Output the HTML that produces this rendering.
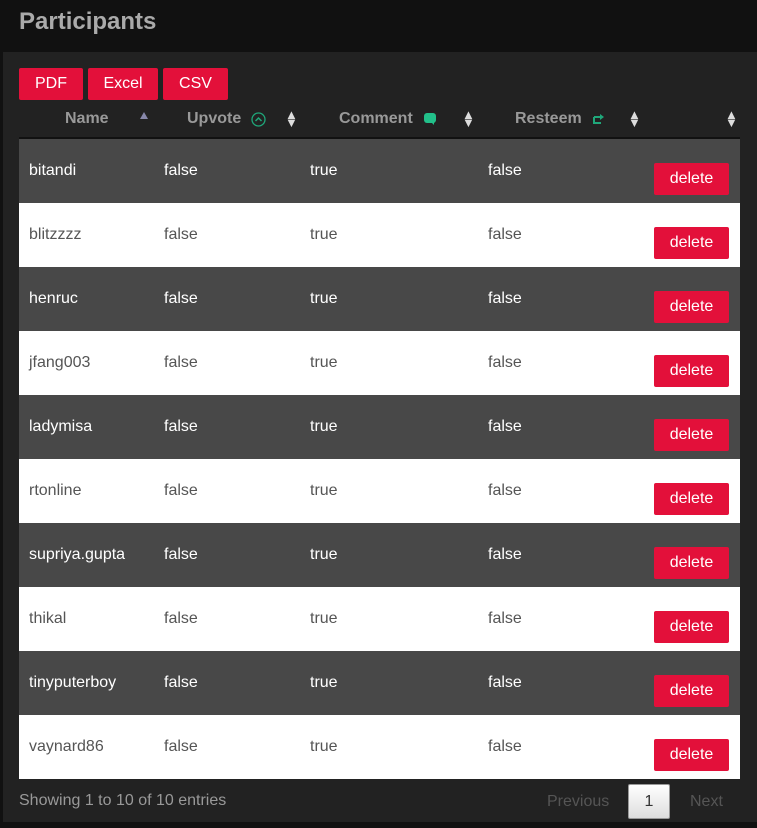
<!DOCTYPE html>
<html><head><style>
*{margin:0;padding:0;box-sizing:border-box}
body{width:757px;height:828px;background:#111;font-family:"Liberation Sans",sans-serif;position:relative;overflow:hidden}
.panel{position:absolute;left:3px;top:0;width:754px;height:822px;background:#222}
.hdr{position:absolute;left:3px;top:0;width:754px;height:52px;background:#111}
.hdr h1{position:absolute;left:16px;top:8px;font-size:24px;color:#aaa;font-weight:bold}
.btn{position:absolute;top:68px;height:32px;background:#e3103a;color:#fff;font-size:16px;line-height:32px;text-align:center;border-radius:2px}
.th{position:absolute;top:110px;font-size:16px;font-weight:bold;color:#999}
.ar{position:absolute;top:111px;color:#ddd;font-size:13px;line-height:8px;width:10px;text-align:center}
.row{position:absolute;left:19px;width:721px;height:64px;font-size:16px}
.row span{position:absolute;top:23px}
.d{background:#484848;color:#fff}
.w{background:#fff;color:#555}
.del{position:absolute;left:635px;top:24px;width:75px;height:32px;background:#e3103a;color:#fff;line-height:32px;text-align:center;border-radius:2px}
</style></head><body>
<div class="panel"></div>
<div class="hdr"><h1>Participants</h1></div>
<div class="btn" style="left:19px;width:64px">PDF</div>
<div class="btn" style="left:88px;width:70px">Excel</div>
<div class="btn" style="left:163px;width:65px">CSV</div>
<div class="th" style="left:65px">Name</div>
<div style="position:absolute;left:140px;top:112px;width:0;height:0;border-left:4px solid transparent;border-right:4px solid transparent;border-bottom:7px solid #88a"></div>
<div class="th" style="left:187px">Upvote</div>
<svg style="position:absolute;left:251px;top:112px" width="15" height="15"><circle cx="7.5" cy="7.5" r="6.5" fill="none" stroke="#1fa77a" stroke-width="1.3"/><path d="M4.5 9 L7.5 6 L10.5 9" fill="none" stroke="#1fa77a" stroke-width="1.5"/></svg>
<div class="ar" style="left:285px">▲<br>▼</div>
<div class="th" style="left:339px">Comment</div>
<svg style="position:absolute;left:423px;top:112px" width="14" height="14"><rect x="1" y="1" width="12" height="10" rx="3" fill="#22c08a"/><path d="M8 10 L11 13 L11 9Z" fill="#22c08a"/></svg>
<div class="ar" style="left:462px">▲<br>▼</div>
<div class="th" style="left:515px">Resteem</div>
<svg style="position:absolute;left:592px;top:113px" width="13" height="12"><path d="M2 4 V10 H9 M2 4 H9" fill="none" stroke="#1fa77a" stroke-width="2"/><path d="M8 1 L12 4 L8 7Z" fill="#1fa77a"/></svg>
<div class="ar" style="left:628px">▲<br>▼</div>
<div class="ar" style="left:725px">▲<br>▼</div>
<div style="position:absolute;left:19px;top:137px;width:721px;height:2px;background:#111"></div>

<div class="row d" style="top:139px"><span style="left:10px">bitandi</span><span style="left:145px">false</span><span style="left:291px">true</span><span style="left:469px">false</span><div class="del">delete</div></div>
<div class="row w" style="top:203px"><span style="left:10px">blitzzzz</span><span style="left:145px">false</span><span style="left:291px">true</span><span style="left:469px">false</span><div class="del">delete</div></div>
<div class="row d" style="top:267px"><span style="left:10px">henruc</span><span style="left:145px">false</span><span style="left:291px">true</span><span style="left:469px">false</span><div class="del">delete</div></div>
<div class="row w" style="top:331px"><span style="left:10px">jfang003</span><span style="left:145px">false</span><span style="left:291px">true</span><span style="left:469px">false</span><div class="del">delete</div></div>
<div class="row d" style="top:395px"><span style="left:10px">ladymisa</span><span style="left:145px">false</span><span style="left:291px">true</span><span style="left:469px">false</span><div class="del">delete</div></div>
<div class="row w" style="top:459px"><span style="left:10px">rtonline</span><span style="left:145px">false</span><span style="left:291px">true</span><span style="left:469px">false</span><div class="del">delete</div></div>
<div class="row d" style="top:523px"><span style="left:10px">supriya.gupta</span><span style="left:145px">false</span><span style="left:291px">true</span><span style="left:469px">false</span><div class="del">delete</div></div>
<div class="row w" style="top:587px"><span style="left:10px">thikal</span><span style="left:145px">false</span><span style="left:291px">true</span><span style="left:469px">false</span><div class="del">delete</div></div>
<div class="row d" style="top:651px"><span style="left:10px">tinyputerboy</span><span style="left:145px">false</span><span style="left:291px">true</span><span style="left:469px">false</span><div class="del">delete</div></div>
<div class="row w" style="top:715px"><span style="left:10px">vaynard86</span><span style="left:145px">false</span><span style="left:291px">true</span><span style="left:469px">false</span><div class="del">delete</div></div>

<div style="position:absolute;left:19px;top:792px;font-size:16px;color:#999">Showing 1 to 10 of 10 entries</div>
<div style="position:absolute;left:547px;top:793px;font-size:16px;color:#555">Previous</div>
<div style="position:absolute;left:628px;top:784px;width:42px;height:35px;background:linear-gradient(#fff,#ddd);border:1px solid #999;border-radius:2px;color:#333;font-size:16px;text-align:center;line-height:33px">1</div>
<div style="position:absolute;left:690px;top:793px;font-size:16px;color:#555">Next</div>
</body></html>
